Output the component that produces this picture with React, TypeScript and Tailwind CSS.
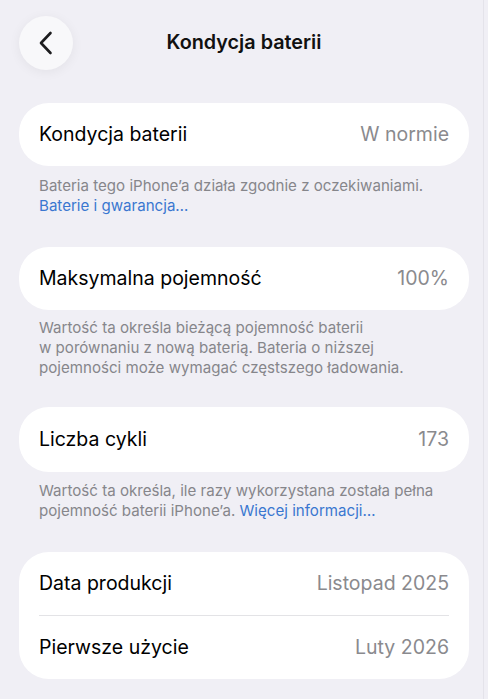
import React from "react";

const font = { fontFamily: "Inter, 'Noto Sans', sans-serif" };

function Row({ label, value }: { label: string; value: string }) {
  return (
    <div className="flex h-[63px] items-center justify-between px-5">
      <span className="text-[19.5px] text-black">{label}</span>
      <span className="text-[19.5px] text-[#8a8a8e]">{value}</span>
    </div>
  );
}

export default function App() {
  return (
    <div className="min-h-[699px] w-[488px] bg-[#f0eff5] relative overflow-hidden" style={font}>
      <div className="absolute right-[4px] top-0 h-full w-px bg-[#e4e3ea]" />
      <div className="relative flex h-[84px] items-center pl-[19px] pt-[1px]">
        <button className="flex h-[54px] w-[54px] items-center justify-center rounded-full bg-[#f8f8fa] shadow-[0_2px_12px_rgba(0,0,0,0.06)]">
          <svg width="16" height="24" viewBox="0 0 16 24" fill="none">
            <path d="M12.5 2 L3 12 L12.5 22" stroke="#1c1c1e" strokeWidth="2.6" strokeLinecap="round" strokeLinejoin="round" />
          </svg>
        </button>
        <div className="absolute left-0 right-0 top-[28px] text-center text-[19.8px] font-semibold text-[#111]">
          Kondycja baterii
        </div>
      </div>

      <div className="px-[19px] pt-[19px]">
        <div className="rounded-[30px] bg-white">
          <Row label="Kondycja baterii" value="W normie" />
        </div>
        <p className="px-5 pt-[10px] text-[15.1px] leading-[20px] text-[#86868b]">
          Bateria tego iPhone’a działa zgodnie z oczekiwaniami.
          <br />
          <span className="text-[#3a77d0]">Baterie i gwarancja…</span>
        </p>

        <div className="mt-[31px] rounded-[30px] bg-white">
          <Row label="Maksymalna pojemność" value="100%" />
        </div>
        <p className="px-5 pt-[8px] text-[15.1px] leading-[20px] text-[#86868b]">
          Wartość ta określa bieżącą pojemność baterii
          <br />
          w porównaniu z nową baterią. Bateria o niższej
          <br />
          pojemności może wymagać częstszego ładowania.
        </p>

        <div className="mt-[29px] rounded-[30px] bg-white">
          <div className="h-[1px]" />
          <Row label="Liczba cykli" value="173" />
          <div className="h-[1px]" />
        </div>
        <p className="px-5 pt-[9px] text-[15.1px] leading-[20px] text-[#86868b]">
          Wartość ta określa, ile razy wykorzystana została pełna
          <br />
          pojemność baterii iPhone’a. <span className="text-[#3a77d0]">Więcej informacji…</span>
        </p>

        <div className="mt-[31px] rounded-[30px] bg-white">
          <Row label="Data produkcji" value="Listopad 2025" />
          <div className="mx-5 h-px bg-[#e3e3e6]" />
          <Row label="Pierwsze użycie" value="Luty 2026" />
        </div>
      </div>
    </div>
  );
}
